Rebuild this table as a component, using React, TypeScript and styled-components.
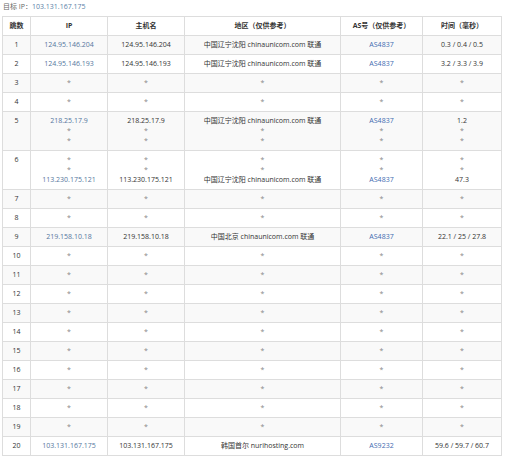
import React from "react";
import styled, { createGlobalStyle } from "styled-components";

const Global = createGlobalStyle`
  html, body { margin: 0; padding: 0; background: #fff; }
  body { font-family: "Open Sans", "Noto Sans CJK SC", sans-serif; }
`;

const Page = styled.div`
  padding: 2px 0 0 2px;
  width: 499px;
`;

const Target = styled.div`
  font-size: 7px;
  line-height: 10px;
  color: #666;
  margin-bottom: 4px;
  padding-left: 1px;
`;

const TargetIp = styled.span`
  color: #5b7fa8;
`;

const Table = styled.table`
  border-collapse: collapse;
  width: 499px;
  table-layout: fixed;
  font-size: 7px;
  line-height: 10px;
`;

const Col = styled.col<{ $w: number }>`
  width: ${(p) => p.$w}px;
`;

const Th = styled.th`
  box-sizing: border-box;
  border: 1px solid #ddd;
  padding: 4px 2px;
  font-weight: bold;
  color: #333;
  text-align: center;
  background: #fff;
  white-space: nowrap;
  overflow: hidden;
`;

const Tr = styled.tr<{ $odd: boolean }>`
  background: ${(p) => (p.$odd ? "#f9f9f9" : "#fff")};
`;

const Td = styled.td<{ $tone: "dark" | "blue" | "ip" }>`
  box-sizing: border-box;
  border: 1px solid #ddd;
  padding: 4px 2px;
  text-align: center;
  vertical-align: top;
  white-space: nowrap;
  overflow: hidden;
  color: ${(p) => (p.$tone === "blue" ? "#3f6bb0" : p.$tone === "ip" ? "#56779e" : "#333")};
`;

const Line = styled.div<{ $star: boolean }>`
  color: ${(p) => (p.$star ? "#888" : "inherit")};
`;

type Hop = {
  n: number;
  ip: string[];
  host: string[];
  region: string[];
  as: string[];
  time: string[];
};

const S = ["*"];
const star = (n: number): Hop => ({ n, ip: S, host: S, region: S, as: S, time: S });
const CN = "中国辽宁沈阳 chinaunicom.com 联通";

const hops: Hop[] = [
  { n: 1, ip: ["124.95.146.204"], host: ["124.95.146.204"], region: [CN], as: ["AS4837"], time: ["0.3 / 0.4 / 0.5"] },
  { n: 2, ip: ["124.95.146.193"], host: ["124.95.146.193"], region: [CN], as: ["AS4837"], time: ["3.2 / 3.3 / 3.9"] },
  star(3),
  star(4),
  {
    n: 5,
    ip: ["218.25.17.9", "*", "*"],
    host: ["218.25.17.9", "*", "*"],
    region: [CN, "*", "*"],
    as: ["AS4837", "*", "*"],
    time: ["1.2", "*", "*"],
  },
  {
    n: 6,
    ip: ["*", "*", "113.230.175.121"],
    host: ["*", "*", "113.230.175.121"],
    region: ["*", "*", CN],
    as: ["*", "*", "AS4837"],
    time: ["*", "*", "47.3"],
  },
  star(7),
  star(8),
  {
    n: 9,
    ip: ["219.158.10.18"],
    host: ["219.158.10.18"],
    region: ["中国北京 chinaunicom.com 联通"],
    as: ["AS4837"],
    time: ["22.1 / 25 / 27.8"],
  },
  ...Array.from({ length: 10 }, (_, i) => star(10 + i)),
  {
    n: 20,
    ip: ["103.131.167.175"],
    host: ["103.131.167.175"],
    region: ["韩国首尔 nurihosting.com"],
    as: ["AS9232"],
    time: ["59.6 / 59.7 / 60.7"],
  },
];

const Cell: React.FC<{ lines: string[]; tone: "dark" | "blue" | "ip" }> = ({ lines, tone }) => (
  <Td $tone={tone}>
    {lines.map((l, i) => (
      <Line key={i} $star={l === "*"}>
        {l}
      </Line>
    ))}
  </Td>
);

export default function App() {
  return (
    <Page>
      <Global />
      <Target>
        目标 IP：<TargetIp>103.131.167.175</TargetIp>
      </Target>
      <Table>
        <colgroup>
          <Col $w={28} />
          <Col $w={77} />
          <Col $w={77} />
          <Col $w={156} />
          <Col $w={82} />
          <Col $w={79} />
        </colgroup>
        <thead>
          <tr>
            <Th>跳数</Th>
            <Th>IP</Th>
            <Th>主机名</Th>
            <Th>地区（仅供参考）</Th>
            <Th>AS号（仅供参考）</Th>
            <Th>时间（毫秒）</Th>
          </tr>
        </thead>
        <tbody>
          {hops.map((h) => (
            <Tr key={h.n} $odd={h.n % 2 === 1}>
              <Cell lines={[String(h.n)]} tone="dark" />
              <Cell lines={h.ip} tone="ip" />
              <Cell lines={h.host} tone="dark" />
              <Cell lines={h.region} tone="dark" />
              <Cell lines={h.as} tone="blue" />
              <Cell lines={h.time} tone="dark" />
            </Tr>
          ))}
        </tbody>
      </Table>
    </Page>
  );
}
